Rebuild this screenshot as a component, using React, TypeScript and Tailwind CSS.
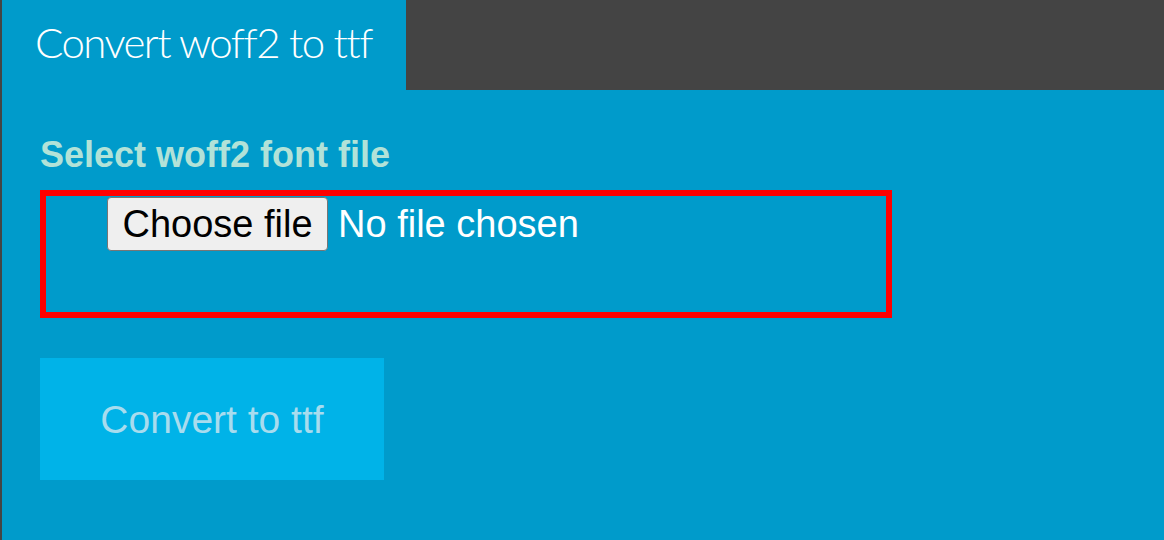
export default function App() {
  return (
    <div className="flex h-[540px] w-full flex-col border-l-2 border-[#444444] bg-[#009bcb] font-['Liberation_Sans',Arial,sans-serif]">
      <header className="flex h-[90px] shrink-0 bg-[#444444]">
        <div className="flex w-[404px] items-center bg-[#009bcb] pb-[6px] pl-[33px]">
          <h1 className="font-['Lato','Open_Sans',sans-serif] text-[42px] font-light leading-none tracking-[-1.55px] text-white">
            Convert woff2 to ttf
          </h1>
        </div>
      </header>

      <main className="flex flex-col items-start pl-[38px] pt-[45px]">
        <label className="text-[36px] font-bold leading-[40px] text-[#b2e2d8]">Select woff2 font file</label>

        <div className="mt-[15px] h-[128px] w-[852px] border-[6px] border-[#ff0000] pl-[61px] pt-px">
          <div className="flex items-center">
            <span className="flex h-[54px] w-[221px] items-center justify-center rounded-[4px] border border-[#767676] bg-[#efefef] text-[38px] leading-none text-black">
              Choose file
            </span>
            <span className="ml-[10px] text-[38px] leading-none text-white">No file chosen</span>
          </div>
        </div>

        <button className="mt-[40px] flex h-[122px] w-[344px] items-center justify-center bg-[#00b3e8] text-[39px] leading-none text-[#a8dcee]">
          Convert to ttf
        </button>
      </main>
    </div>
  );
}
